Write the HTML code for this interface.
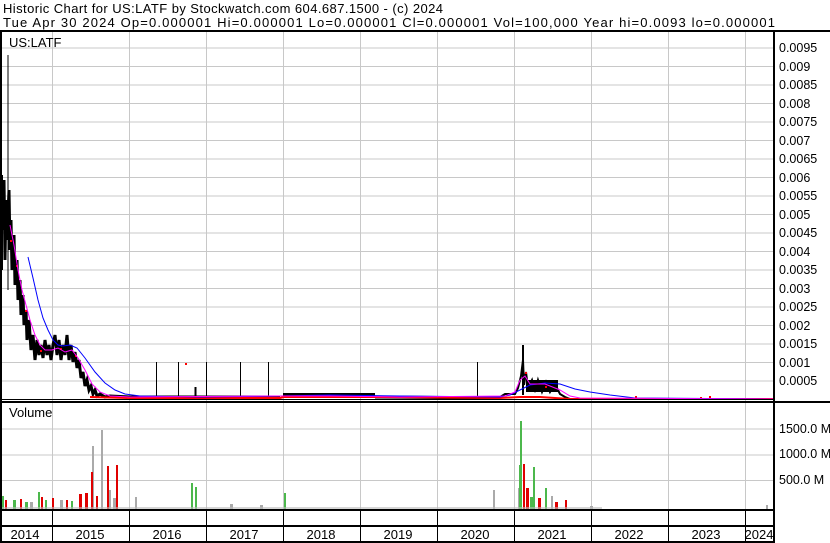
<!DOCTYPE html>
<html><head><meta charset="utf-8"><style>
html,body{margin:0;padding:0;background:#fff;width:830px;height:543px;overflow:hidden}
svg{display:block;font-family:"Liberation Sans",Arial,sans-serif}
</style></head><body>
<svg width="830" height="543" viewBox="0 0 830 543" xmlns="http://www.w3.org/2000/svg">
<rect width="830" height="543" fill="#fff"/>
<text x="3" y="13" font-size="13" fill="#000" textLength="440" lengthAdjust="spacing">Historic Chart for US:LATF by Stockwatch.com 604.687.1500 - (c) 2024</text>
<text x="3" y="27" font-size="13" fill="#000" textLength="772" lengthAdjust="spacing">Tue Apr 30 2024   Op=0.000001   Hi=0.000001   Lo=0.000001   Cl=0.000001   Vol=100,000   Year hi=0.0093   lo=0.000001</text>
<g stroke="#c8c8c8" stroke-width="1">
<line x1="0" y1="48" x2="773" y2="48"/><line x1="0" y1="66.5" x2="773" y2="66.5"/><line x1="0" y1="85" x2="773" y2="85"/><line x1="0" y1="103.5" x2="773" y2="103.5"/><line x1="0" y1="122" x2="773" y2="122"/><line x1="0" y1="140.5" x2="773" y2="140.5"/><line x1="0" y1="159" x2="773" y2="159"/><line x1="0" y1="177.5" x2="773" y2="177.5"/><line x1="0" y1="196" x2="773" y2="196"/><line x1="0" y1="214.5" x2="773" y2="214.5"/><line x1="0" y1="233" x2="773" y2="233"/><line x1="0" y1="251.5" x2="773" y2="251.5"/><line x1="0" y1="270" x2="773" y2="270"/><line x1="0" y1="288.5" x2="773" y2="288.5"/><line x1="0" y1="307" x2="773" y2="307"/><line x1="0" y1="325.5" x2="773" y2="325.5"/><line x1="0" y1="344" x2="773" y2="344"/><line x1="0" y1="362.5" x2="773" y2="362.5"/><line x1="0" y1="381" x2="773" y2="381"/>
<line x1="0" y1="429" x2="773" y2="429"/><line x1="0" y1="455" x2="773" y2="455"/><line x1="0" y1="480.5" x2="773" y2="480.5"/>
<line x1="52.5" y1="32" x2="52.5" y2="509"/><line x1="129.5" y1="32" x2="129.5" y2="509"/><line x1="206.5" y1="32" x2="206.5" y2="509"/><line x1="283.5" y1="32" x2="283.5" y2="509"/><line x1="360.5" y1="32" x2="360.5" y2="509"/><line x1="437.5" y1="32" x2="437.5" y2="509"/><line x1="514.5" y1="32" x2="514.5" y2="509"/><line x1="591.5" y1="32" x2="591.5" y2="509"/><line x1="668.5" y1="32" x2="668.5" y2="509"/><line x1="745.5" y1="32" x2="745.5" y2="509"/>
</g>
<text x="9" y="47" font-size="13">US:LATF</text>
<text x="9" y="417" font-size="13">Volume</text>
<g stroke="#000" fill="none">
<line x1="8" y1="55" x2="8" y2="290" stroke-width="1"/>
<line x1="2" y1="175" x2="2" y2="270" stroke-width="2"/>
<polyline stroke-width="3" points="3,230 4,180 5,260 6,200 7,240 9,190 10,250 11,220 12,270 14,235 15,285 17,260 18,300 20,280 21,315 23,295 24,325 26,310 27,340 29,320 31,350 33,335 35,360 37,340 39,355 41,345 43,358 45,340 47,355 49,345 51,360 53,345 55,335 57,355 59,340 61,360 63,345 65,355 67,335 69,360 71,345 73,362 75,352 77,368 79,360 81,378 83,372 85,386 87,380 89,390 91,386 93,394 95,390 97,396 100,394 105,397 110,396 130,397 280,397"/>
<polyline stroke-width="4" points="283,395 320,395 345,395 375,395"/>
<polyline stroke-width="3" points="375,397 500,398"/>
<polyline stroke-width="2" points="500,397 505,394 515,394 518,388 521,376 523,360 524,385 526,372 528,388 532,380 535,392 538,380 542,392 546,382 550,392 555,384 560,394 565,397 570,399"/>
<rect x="526" y="380" width="32" height="12" fill="#000" stroke="none"/>
<line x1="523" y1="345" x2="523" y2="395" stroke-width="2"/>
<line x1="156.5" y1="362" x2="156.5" y2="398"/><line x1="178.5" y1="362" x2="178.5" y2="398"/><line x1="206.5" y1="362" x2="206.5" y2="398"/><line x1="240.5" y1="362" x2="240.5" y2="398"/><line x1="268.5" y1="362" x2="268.5" y2="398"/><line x1="477.5" y1="362" x2="477.5" y2="398"/>
<line x1="195.5" y1="387" x2="195.5" y2="398" stroke-width="2"/>
</g>
<rect x="185" y="363" width="2" height="2" fill="red"/>
<g fill="red"><rect x="10" y="240" width="2" height="2"/><rect x="16" y="265" width="2" height="2"/><rect x="25" y="310" width="2" height="2"/><rect x="40" y="350" width="2" height="2"/><rect x="60" y="348" width="2" height="2"/><rect x="75" y="355" width="2" height="2"/><rect x="525" y="372" width="2" height="2"/><rect x="545" y="386" width="2" height="2"/><rect x="700" y="397" width="2" height="2"/><rect x="709" y="396" width="2" height="2"/><rect x="635" y="396" width="2" height="2"/></g>
<polyline fill="none" stroke="red" stroke-width="2" points="90,397 130,398 280,398 284,397 330,397 345,397 380,397 500,398 520,397 540,397 570,399 773,399"/>
<polyline fill="none" stroke="#0000ff" stroke-width="1" points="28,257 33,278 38,300 43,318 48,330 53,340 58,345 63,346 70,345 77,348 85,358 95,372 105,383 115,390 125,394 140,396 200,397 280,396 330,395 400,396 500,397 510,395 520,390 530,385 545,383 560,384 575,389 590,392 610,395 635,398 773,399"/>
<polyline fill="none" stroke="#ff00ff" stroke-width="1" points="10,225 14,245 18,270 22,290 26,305 30,320 35,335 40,345 45,350 52,350 58,348 65,352 72,350 78,358 85,370 92,384 100,392 110,396 130,397 280,396 330,396 400,397 505,396 515,392 520,380 525,376 530,384 545,384 560,390 570,396 580,398 773,399"/>
<g fill="#aaa">
<rect x="92" y="446" width="2" height="63"/><rect x="101" y="430" width="2" height="79"/><rect x="108" y="490" width="3" height="19"/><rect x="135" y="497" width="2" height="12"/><rect x="113" y="498" width="3" height="11"/><rect x="518" y="488" width="2" height="21"/><rect x="493" y="490" width="2" height="19"/><rect x="551" y="496" width="2" height="13"/><rect x="60" y="500" width="3" height="9"/><rect x="30" y="502" width="3" height="7"/><rect x="230" y="504" width="3" height="5"/><rect x="260" y="505" width="3" height="4"/><rect x="590" y="506" width="3" height="3"/><rect x="766" y="505" width="2" height="4"/></g>
<g fill="#e00000">
<rect x="91" y="472" width="2" height="37"/><rect x="107" y="466" width="2" height="43"/><rect x="116" y="465" width="2" height="44"/><rect x="79" y="494" width="3" height="15"/><rect x="85" y="493" width="3" height="16"/><rect x="52" y="498" width="2" height="11"/><rect x="20" y="499" width="2" height="10"/><rect x="41" y="497" width="2" height="12"/><rect x="5" y="500" width="2" height="9"/><rect x="66" y="500" width="2" height="9"/><rect x="96" y="496" width="2" height="13"/><rect x="523" y="464" width="2" height="45"/><rect x="526" y="488" width="3" height="21"/><rect x="538" y="498" width="3" height="11"/><rect x="565" y="500" width="2" height="9"/><rect x="555" y="502" width="3" height="7"/></g>
<g fill="#4cb84c">
<rect x="2" y="496" width="2" height="13"/><rect x="13" y="500" width="3" height="9"/><rect x="38" y="492" width="2" height="17"/><rect x="25" y="502" width="3" height="7"/><rect x="45" y="500" width="2" height="9"/><rect x="71" y="501" width="2" height="8"/><rect x="191" y="483" width="2" height="26"/><rect x="195" y="487" width="2" height="22"/><rect x="520" y="421" width="2" height="88"/><rect x="519" y="465" width="2" height="44"/><rect x="533" y="467" width="2" height="42"/><rect x="545" y="488" width="2" height="21"/><rect x="284" y="493" width="2" height="16"/><rect x="530" y="497" width="3" height="12"/></g>
<rect x="2" y="507" width="600" height="2" fill="#bbb" opacity="0.6"/>
<g fill="#000">
<rect x="0" y="30" width="830" height="2"/>
<rect x="0" y="30" width="2" height="513"/>
<rect x="773" y="30" width="2" height="513"/>
<rect x="0" y="399" width="775" height="1"/>
<rect x="0" y="401" width="830" height="2"/>
<rect x="0" y="509" width="775" height="2"/>
<rect x="0" y="525" width="775" height="2"/>
<rect x="0" y="541" width="775" height="2"/>
<rect x="52" y="509" width="1" height="34"/><rect x="129" y="509" width="1" height="34"/><rect x="206" y="509" width="1" height="34"/><rect x="283" y="509" width="1" height="34"/><rect x="360" y="509" width="1" height="34"/><rect x="437" y="509" width="1" height="34"/><rect x="514" y="509" width="1" height="34"/><rect x="591" y="509" width="1" height="34"/><rect x="668" y="509" width="1" height="34"/><rect x="745" y="509" width="1" height="34"/>
</g>
<g font-size="13" fill="#000" text-anchor="middle">
<text x="25" y="539">2014</text><text x="90" y="539">2015</text><text x="167" y="539">2016</text><text x="244" y="539">2017</text><text x="321" y="539">2018</text><text x="398" y="539">2019</text><text x="475" y="539">2020</text><text x="552" y="539">2021</text><text x="629" y="539">2022</text><text x="706" y="539">2023</text><text x="759" y="539">2024</text>
</g>
<g font-size="12.5" fill="#000">
<text x="779" y="52">0.0095</text><text x="779" y="71">0.009</text><text x="779" y="89">0.0085</text><text x="779" y="108">0.008</text><text x="779" y="126">0.0075</text><text x="779" y="145">0.007</text><text x="779" y="163">0.0065</text><text x="779" y="182">0.006</text><text x="779" y="200">0.0055</text><text x="779" y="219">0.005</text><text x="779" y="237">0.0045</text><text x="779" y="256">0.004</text><text x="779" y="274">0.0035</text><text x="779" y="293">0.003</text><text x="779" y="311">0.0025</text><text x="779" y="330">0.002</text><text x="779" y="348">0.0015</text><text x="779" y="367">0.001</text><text x="779" y="385">0.0005</text>
<text x="779" y="433">1500.0 M</text><text x="779" y="458">1000.0 M</text><text x="779" y="484">500.0 M</text>
</g>
</svg>
</body></html>
